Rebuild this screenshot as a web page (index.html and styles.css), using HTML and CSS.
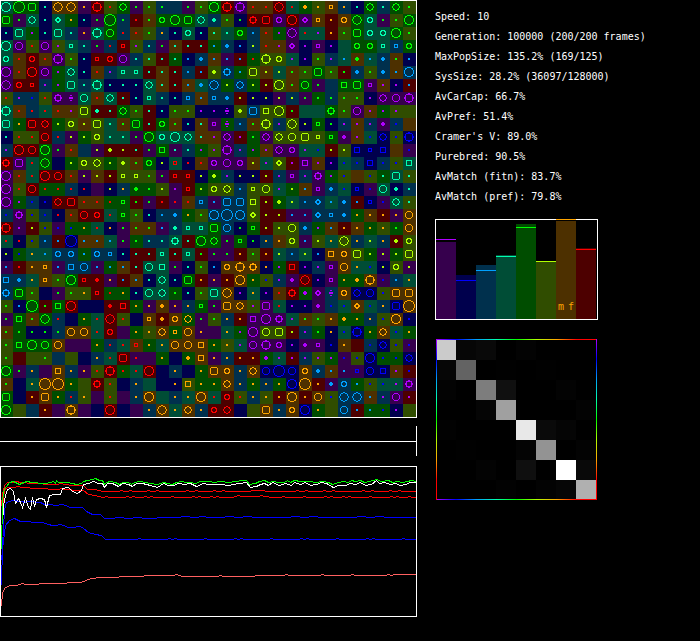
FILE: index.html
```html
<!DOCTYPE html>
<html lang="en">
<head>
<meta charset="utf-8">
<title>Population simulation</title>
<link rel="stylesheet" href="styles.css">
</head>
<body>
<main class="layout">
  <section class="world">
    <svg id="field" class="field" viewBox="0 0 417 418" role="img" aria-label="Population field"></svg>
    <div class="timeline"></div>
    <svg id="history" class="history" viewBox="0 466 417 151" role="img" aria-label="History"></svg>
  </section>
  <section class="side">
    <ul class="stats">
      <li>Speed: 10</li>
      <li>Generation: 100000 (200/200 frames)</li>
      <li>MaxPopSize: 135.2% (169/125)</li>
      <li>SysSize: 28.2% (36097/128000)</li>
      <li>AvCarCap: 66.7%</li>
      <li>AvPref: 51.4%</li>
      <li>Cramer's V: 89.0%</li>
      <li>Purebred: 90.5%</li>
      <li>AvMatch (fitn): 83.7%</li>
      <li>AvMatch (pref): 79.8%</li>
    </ul>
    <svg id="bars" class="bars" viewBox="0 0 163 101" role="img" aria-label="Group sizes"></svg>
    <svg id="matrix" class="matrix" viewBox="0 0 161 161" role="img" aria-label="Mating matrix"></svg>
  </section>
</main>
<script src="script.js"></script>
</body>
</html>
```
FILE: styles.css
```css
* { box-sizing: border-box; }

body {
  margin: 0;
  min-height: 100vh;
  background: #000;
  color: #fff;
  font-family: "DejaVu Sans Mono", "Liberation Mono", monospace;
  font-size: 10px;
  line-height: 20px;
}

.layout {
  display: grid;
  grid-template-columns: minmax(0, 417px) minmax(0, 1fr);
  column-gap: 18px;
  align-items: start;
}

svg {
  display: block;
  shape-rendering: crispEdges;
}

.field,
.history { width: 100%; }

.timeline {
  height: 30px;
  margin: 8px 0 10px;
  border-right: 1px solid #fff;
  background: linear-gradient(#fff, #fff) 0 15px / 100% 1px no-repeat;
}

.stats {
  list-style: none;
  margin: 0;
  padding: 7px 0 12px;
  white-space: nowrap;
}

.bars { width: 163px; }

.bars text {
  font-size: 10px;
  fill: #ffa500;
}

.matrix {
  width: 161px;
  margin: 19px 0 0 1px;
}
```
FILE: script.js
```js
const DARK = { V: "#36004d", B: "#00004d", C: "#00304d", T: "#004d36", G: "#004d00", Y: "#304d00", O: "#4d3000", R: "#4d0000" };
const LIGHT = { V: "#b000ff", B: "#0000ff", C: "#00a0ff", T: "#00ffb0", G: "#00ff00", Y: "#b0ff00", O: "#ffa500", R: "#ff0000" };

// One quadrant of each glyph, as pixel offsets from the centre; mirrored both ways.
const GLYPHS = {
  ".": "00", "+": "00 10 01", "*": "00 10 02", q: "10 11 01", e: "10 11 01 20 02",
  Q: "20 21 22 12 02", s: "20 21 22 12 02 30 03", o: "20 21 11 12 02",
  d: "30 21 22 12 03", c: "30 31 22 13 03", r: "30 31 32 23 13 03",
  C: "40 41 32 33 23 14 04", k: "30 31 32 23 13 03 40 04",
  D: "40 31 32 23 13 04", K: "50 51 42 43 34 24 15 05", _: ""
};

// Each cell: ground colour, mark colour, glyph.
const ROWS = [
"TTC GGK GGr BT. OOD OOD VO. RRk YR. GGd VG. YG. CG. C__ VG. YG. GGC RRk VVk OR. OR. RRD TR. GO+ YO. OOq CO. BT. GGd CT. GGd YG.",
"GGr VG. TTd BT. TTe GO. BT. VG. GGK CG. RR. OG. GGo GGC GGr TTd CT+ YG. BG. RRs RRr VVo RRC VVe OOq RO. OOo GGD TTo VG. YG. GGC",
"BT. TTr GV. BT. TTr CT. VO. TTk GGc CR. OR. YG. CO. BT. TTo BT. YT. TT. GGo CC. OR. GV. VVD TR. TV. RO. YG. GGr TTo TTo GGC YG.",
"TTC VVc YR. VVc YV. TTq CT. VG. CR. RRq YV. CT. VG. OT. RT. RT. GC. CC+ BC. CY. OR. OV. VVe BV. VVq BV. T__ GGo GGo TTq CCq GGo",
"TTo OR. RRo OR. VVk YG. BT. RRq RRo VVc CT. YT. RT. GT. BC. CC+ OC. VC. RC. GR. YYk YYo TV. BV. YG. CV. TC. OG+ TC. CC+ OG. BC.",
"VVC OR. RRC VVc GV. TTd BT. OR. CV. TTq TTq RT. OT. RT. CC. RC. YY+ CCs GC. YYr OY. TY. OG. YG. GGr YG. RG. CC+ YG. CC+ OC. CCC",
"VVD RRo RRq CV. GV. TTr CT. TTk BT. BT. BT. TTd OT. RT. OC. TC+ CCD GY. CCd GY. RY. YYC OG. GGc VG. C__ GGQ GGr VVq OV. BV. RC.",
"YR. CV. CB. YR. VVs VV* TTc OR. TTd RT. BT. TTq CT. BT. CCq OC. CCq CC+ RY. BY. BY. VY. CY. VG. GG. CG. YG. YG. BV. VVd VVc VVk",
"TTk OR. CR. TR. OR. OV. YYr RT+ RT. GGd YG. RT. BT. YG. YG. BV. BV. BV* YY+ CCr YYQ YYC RG. T__ T__ GGs YG. VVc OV. GV. YV. Y__",
"TTr GO. RRr RRd GY. YYo OY. YYr TT. OG. GGr RT. GGo OG. BT. OT. VVq GV* CC. OG. YYk CV. YYD BY. GGq BG. CV. OV. CV. VV+ CB. O__",
"BT. YR. YR. RRc CR. VY. GY. YYo TT. TT. VG. GGC TTo TTC TTd OT. OV. VVd RV. GG. VVd YYd YYc YYr YYq GGq VV+ OV. TB. BBd YB. BBk",
"CV. RRC RRc GGC VG. OR. C__ VY. RY+ RY. RT. VG. GGQ VT. CT. GV. YV. VVk CV. GV. OV. VVd VVo TV. TB. RY. YY. BBQ BBq BBQ O__ VB.",
"RRs VVr TR. GGD B__ GY. YYo YYd GY. YY+ OG. GGo BY. TRq BR. OR. VVo VVc VVo OY. TV. YYe RV. VVQ OV. BV. TB. CB. BBQ CB. YB. TTQ",
"VVC OR. TR. RRC RRc OR. VY. OY. RY. YYq YYq YG. VG. RRq RRq BY. GY+ CV. BY. BY. RY. CV. VVq CV. VVs GV. YB. O__ YB. GT. TTr YT.",
"VVC YR. RRc GR. GR. CR. BR. V__ BY. CO. GG+ GG. YY. VV. RRq GY. YYo YYd CC. YYq YYc TV. GY. OC. VVq CC+ TB. BBq VB. TTc BT+ CT.",
"VVC GV. CB. BB. RRd RRr OR. OR. GR. GGq RG. VG. RR. VR. OR. CCq VC. CCr CCr YYQ RY. GY+ TY. CC. CCe TC. CC+ RC. BBq VB. TTd YT.",
"CB. VVs YB. CB. BR. OR. RRc RRo TR. GGq YG. BT. CC. CC+ GO. YG. CCC CCK CCC YYe RY. RY. VC. VC. CCe CCq CC+ GO. OO. RO. VO. OOc",
"RRk VV. RY. YB. VB. GB. GO. TR. BO. VG. OG. OG. VC. CT+ TTq TTq GGr CCc BG. GGq RY. YY. YYc CC+ GV. OC. RO. OO. GO. YO. GG. OOc",
"TR. BR. YB. CC. RC. BBK OC. OC. TC. VG. GG. CT. CT. TTs RT. GGC GGd VG. GGq BG. CO. OO. YYo VC. YY. TO. YYD CO. TY. CO. RY+ YYo",
"BY. GB. TO. TC. CCo CCo GC. CCo CCq BT. RT. RT. TTq RT. TTq RG. VG. VG. RO. YG. RO. TY. CC. TY. BC. OOQ OOo YYr GY. VY. GY. YYr",
"VC. RR. OO. OOq VC. CCQ CCc VC. GC. OC. RT. TTc TTQ VG. BT. YG. BC. OOo OOk OOs BO. GV. RRQ BV. CV. VVq OOc TO. TB. BY. YYo VY.",
"CCQ CC+ TO. OOq YG. GGC RRq RR+ VO. RC. OC. BT. TTd BT. GGr RO. VO. RO. OOC GO. YB. CV. VV+ RRD BV. VVq GO. GO+ OOk VB. CC. TO.",
"CCs GGr YG. B__ VG. YG. YO. RRq GR. GO. BT. TTc TTd GG. BT. YG. TTr OOD BV. TO. BV. OR. RRs GV+ VVe CV* OOo BBd BBc YB. OOr OOr",
"YG. BC. GGK RG. GGQ RRC B__ B__ RR+ RRQ GO. VO. OO+ VO. CO. GGq VG. OOr OOd YV. VVr TR. BV. BV. VV+ CB. TB. OOe TB. CO. BBr OOK",
"VG. GGQ OG. GGD CR. B__ GO. TR. RRD YR. B__ OOq RO+ OOo GOd VG. YG. CO. RO. VVQ VVC VVs TV. OG. YG. OO. GO+ GO. CO. YB. OOC BB.",
"OG. GG. BG. BG. CG. OOc OOc TR. RRo V__ GO. YO. OOd GOq OOc VO. V__ TO. GV. VVC YYc YYr RY. CV. GG. BO. TB. BBk GO. OOd TB. GO.",
"YG. GGQ GGC GGc OOc V__ V__ GO. CR. TR. ORq GO. TO. OOc OOc OOQ GO. YO. TV. VVc VVk VVo BV. VV+ VVq BB. OO. R__ CB. BBd YB. VB.",
"YG. R__ Y__ YG. C__ Y__ B__ CO. TR. RRr VR. V__ GO. B__ GO+ OOQ VO. CO. RO. RO. GV+ TV. RV. CV. YV. GV. VB. YB. BBC GB. GB. BBd",
"GGC VG. CO. V__ OOQ CO. VO. YR. RRk GR. TR. RRC B__ CO. B__ GO. OOr OOo CO. OOd BBc BBK BBc OOo CC+ OC. VC. VBq BBc BBQ OV. RB.",
"OG. B__ TO. OOK OOK GO. Y__ RRs YR. B__ CO. T__ B__ BO. YOQ GO. GO. OOd CO. GO. CO. GO. BBC OOK RO. VC+ CCo GC. YB. TB. TV. VVs",
"GGr B__ RO. OOr GO. CR. YO. V__ YR. V__ CO. OOC T__ CO. TO. OOC TR. RRo YR. CO. YO. RO. OOC RO. OOc YB. CCD CCD OC. CV. VVc RV.",
"GGC Y__ C__ RO. V__ OOk V__ B__ RRC B__ V__ CO. OOD TO. OOd CO. RRo RRd B__ Y__ OOr CO. OOo BBC GO. Y__ CCc RC. GC. GB. BV. Y__"
];

const rect = (x, y, w, h, fill) => `<rect x="${x}" y="${y}" width="${w}" height="${h}" fill="${fill}"/>`;
const frame = (x, y, w, h) => `<rect x="${x + 0.5}" y="${y + 0.5}" width="${w - 1}" height="${h - 1}" fill="none" stroke="#fff"/>`;

function drawField() {
  let out = "";
  const marks = {};
  ROWS.forEach((row, j) => row.split(" ").forEach((cell, i) => {
    const x = i * 13, y = j * 13 + 1;
    out += rect(x, y, 13, 13, DARK[cell[0]]);
    GLYPHS[cell[2]].split(" ").filter(Boolean).forEach(p => {
      const a = +p[0], b = +p[1];
      for (const px of [6 + a, 5 - a]) for (const py of [6 + b, 5 - b])
        marks[cell[1]] = (marks[cell[1]] || "") + `M${x + px} ${y + py}h1v1h-1z`;
    });
  }));
  for (const k in marks) out += `<path d="${marks[k]}" fill="${LIGHT[k]}"/>`;
  document.getElementById("field").innerHTML = out + frame(0, 0, 417, 418);
}

const SERIES = [
  ["#ff6060", 1, "1,606 2,592 5,587 10,585 25,584 50,583 80,582 88,579 97,577 105,577 130,576 155,575 208,576 250,576 265,575 370,575 416,574"],
  ["#0000ff", 1, "1,585 2,545 4,510 6,502 12,500 25,502 40,502 44,504 55,505 62,504 70,507 82,507 86,511 92,514 100,514 104,518 208,517 416,517"],
  ["#0000ff", 1, "1,560 3,540 5,525 9,520 14,518 20,521 35,522 42,522 52,525 60,524 68,527 80,526 88,532 95,534 101,535 105,539 112,539 208,539 416,539"],
  ["#ff0000", 1, "1,506 2,494 4,485 7,482 20,482 22,483 40,483 45,484 65,484 72,485 83,485 87,489 95,489 103,491 240,491 260,490 270,491 416,491"],
  ["#ff0000", 1, "2,510 3,495 5,488 8,487 22,487 40,488 55,489 68,489 75,490 83,490 88,494 95,495 103,497 208,497 258,496 280,497 416,497"],
  ["#ffffff", 0, "2,524 3,505 5,495 7,489 10,488 13,491 15,503 18,498 20,502 22,507 25,498 28,507 30,509 32,497 34,506 36,499 40,498 44,499 46,507 49,495 54,494 60,494 62,488 68,487 72,491 77,493 81,490 83,484 88,483 93,481 98,483 102,483 104,487 107,483 112,483 118,486 122,483 128,484 132,486 136,483 142,483 150,485 157,487 163,483 168,485 173,485 178,483 184,484 190,483 196,486 203,483 208,484 215,484 221,484 228,485 233,484 239,483 246,482 250,487 256,486 260,484 264,483 268,485 272,482 279,485 285,483 291,485 294,482 300,484 305,482 310,485 316,484 321,482 326,483 333,487 338,485 345,485 350,483 355,484 360,482 365,485 371,484 376,480 379,483 384,482 390,484 395,483 400,485 405,484 410,482 416,482"],
  ["#00ff00", 0, "1,549 2,500 4,488 6,486 9,482 13,481 17,483 19,484 23,482 27,481 31,482 35,482 40,483 45,483 50,482 53,481 55,483 56,480 58,482 67,482 72,483 76,484 81,483 83,481 87,480 92,479 95,478 99,480 102,480 104,484 106,482 110,481 115,482 119,484 122,482 128,482 131,484 134,482 140,481 145,482 150,483 157,484 163,482 167,483 172,484 176,482 181,481 186,482 190,482 195,483 200,481 208,481 214,482 220,481 228,482 236,481 242,480 246,480 249,484 255,483 259,481 264,480 268,482 273,481 278,482 284,482 287,480 290,482 294,480 300,481 308,481 316,482 322,481 328,482 332,484 338,482 343,481 348,482 351,480 355,481 360,480 364,482 369,481 376,479 381,481 388,480 392,482 397,481 402,482 407,481 411,480 416,481"]
];

function drawHistory() {
  const lines = SERIES.map(([color, noise, data], n) => {
    const pts = data.split(" ").map(p => p.split(",").map(Number));
    const out = [];
    pts.forEach(([x, y], i) => {
      out.push([x, y]);
      const next = pts[i + 1];
      if (!noise || !next || next[0] - x < 8) return;
      for (let t = x + 3; t < next[0] - 2; t += 3) {
        const h = (t * 37 + n * 101 + ((t * t) >> 2) * 13) % 11;
        const mid = Math.round(y + (next[1] - y) * (t - x) / (next[0] - x));
        out.push([t, mid - (h < 2 ? 1 : 0)]);
      }
    });
    return `<polyline fill="none" stroke="${color}" points="${out.map(p => `${p[0] + 0.5},${p[1] + 0.5}`).join(" ")}"/>`;
  });
  document.getElementById("history").innerHTML = lines.join("") + frame(0, 466, 417, 151);
}

function drawBars() {
  // Colour, bar top, level line.
  const bars = [["V", 23, 20], ["B", 56, 61], ["C", 46, 51], ["T", 36, 37], ["G", 5, 8], ["Y", 43, 42], ["O", 2, 0], ["R", 29, 30]];
  let out = frame(0, 0, 163, 101);
  bars.forEach(([c, top, level], i) => {
    out += rect(1 + i * 20, top, 20, 100 - top, DARK[c]) + rect(1 + i * 20, level, 20, 1, LIGHT[c]);
  });
  out += '<text x="123" y="91">m</text><text x="133" y="91">f</text>';
  document.getElementById("bars").innerHTML = out;
}

function drawMatrix() {
  const grid = [
    [203, 6, 9, 0, 3, 0, 0, 0],
    [6, 99, 0, 1, 0, 1, 0, 0],
    [3, 0, 125, 16, 0, 0, 3, 0],
    [0, 0, 5, 160, 0, 0, 0, 3],
    [2, 0, 0, 0, 232, 10, 5, 0],
    [0, 1, 0, 0, 4, 147, 0, 3],
    [0, 0, 3, 0, 15, 0, 255, 9],
    [0, 0, 0, 2, 0, 3, 6, 176]
  ];
  const stops = [..."VBCTGYOR"].map((c, i) => `<stop offset="${i / 8}" stop-color="${LIGHT[c]}"/>`).join("");
  let out = `<defs><linearGradient id="across">${stops}</linearGradient><linearGradient id="down" x2="0" y2="1">${stops}</linearGradient></defs>`;
  grid.forEach((row, j) => row.forEach((v, i) => {
    out += rect(i * 20, 1 + j * 20, 20, 20, `rgb(${v},${v},${v})`);
  }));
  out += rect(0, 0, 161, 1, "url(#across)") + rect(0, 160, 161, 1, "url(#across)");
  out += rect(0, 0, 1, 161, "url(#down)") + rect(160, 0, 1, 161, "url(#down)");
  document.getElementById("matrix").innerHTML = out;
}

drawField();
drawHistory();
drawBars();
drawMatrix();
```
